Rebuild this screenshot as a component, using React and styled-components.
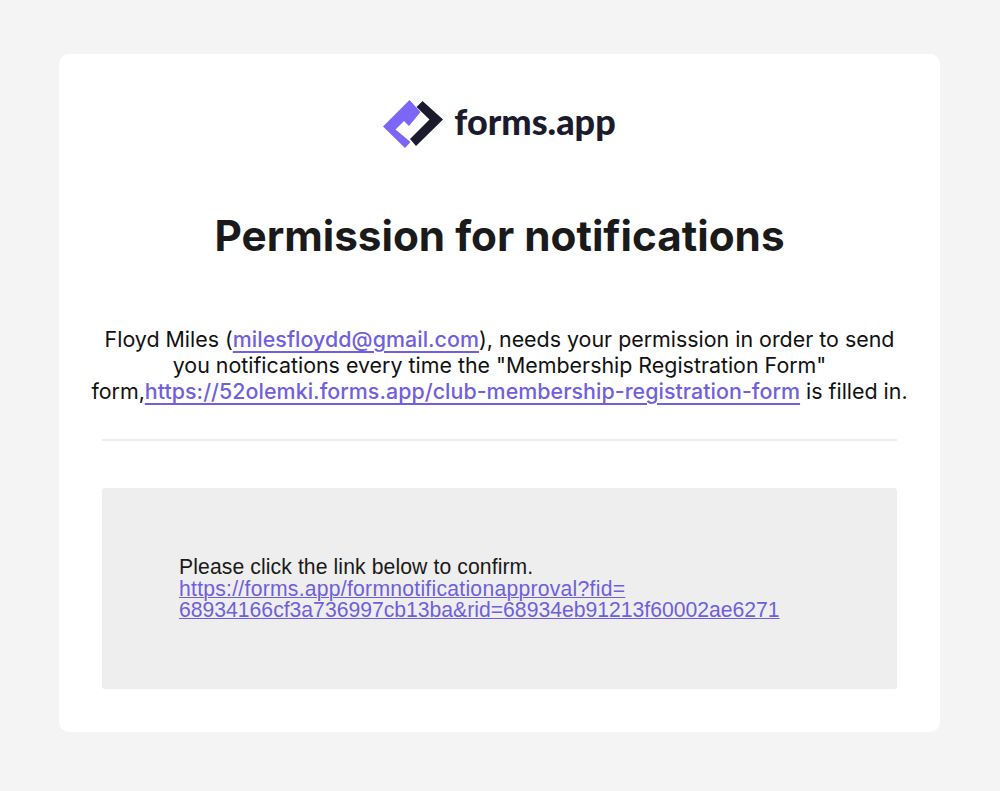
import React from "react";
import styled, { createGlobalStyle } from "styled-components";

const GlobalStyle = createGlobalStyle`
  html, body {
    margin: 0;
    padding: 0;
    background: #f4f4f4;
  }
`;

const Page = styled.div`
  width: 1000px;
  height: 791px;
  padding: 54px 60px 0 59px;
  box-sizing: border-box;
  background: #f4f4f4;
  font-family: Inter, "Liberation Sans", sans-serif;
  overflow: hidden;
`;

const Card = styled.main`
  height: 678px;
  box-sizing: border-box;
  padding-top: 46px;
  background: #ffffff;
  border-radius: 10px;
  display: flex;
  flex-direction: column;
  align-items: center;
`;

const Brand = styled.div`
  display: flex;
  align-items: center;
  gap: 11px;
  height: 48px;
`;

const BrandName = styled.span`
  padding-bottom: 6px;
  font-family: Lato, Inter, sans-serif;
  font-size: 36px;
  font-weight: 900;
  color: #1c1b2e;
`;

const Title = styled.h1`
  margin: 63px 0 0;
  font-size: 42.25px;
  line-height: 50px;
  font-weight: 700;
  color: #1a1a1a;
  text-align: center;
`;

const Intro = styled.p`
  margin: 65px 0 0;
  font-size: 21.4px;
  line-height: 26px;
  color: #111111;
  text-align: center;
  white-space: nowrap;
`;

const Link = styled.a`
  color: #7060e0;
  font-weight: 500;
  letter-spacing: 0.05px;
  text-decoration: underline;
  text-underline-offset: 4px;
  text-decoration-thickness: 1.5px;
`;

const Divider = styled.hr`
  width: 795px;
  height: 2px;
  margin: 34.5px 0 0;
  border: 0;
  background: #eeeeee;
`;

const Notice = styled.section`
  width: 795px;
  height: 201px;
  margin-top: 47px;
  padding: 68.5px 0 0 77px;
  box-sizing: border-box;
  background: #eeeeee;
  border-radius: 3px;
  font-family: "Liberation Sans", Arial, sans-serif;
  font-size: 21.16px;
  line-height: 21.5px;
  color: #1a1a1a;
`;

const NoticeLine = styled.span`
  display: block;
  letter-spacing: ${(props) => props.$spacing || 0}px;
`;

const NoticeLink = styled.a`
  display: block;
  color: #6f5fdc;
  text-decoration: underline;
  text-decoration-thickness: 1px;
`;

const Logo = () => (
  <svg width="60" height="48" viewBox="0 0 60 48" aria-hidden="true">
    <path
      d="M26.5 0 L37.5 12 L26 26 L21 21 L12.5 29.5 L27.5 42 L22 48 L0 26.5 Z"
      fill="#7b66f5"
    />
    <path
      d="M39.5 1 L33.5 7 L46.5 19.5 L27 39 L33 46 L60 19.5 Z"
      fill="#1c1b2e"
    />
  </svg>
);

export default function App() {
  return (
    <>
      <GlobalStyle />
      <Page>
        <Card>
          <Brand>
            <Logo />
            <BrandName>forms.app</BrandName>
          </Brand>
          <Title>Permission for notifications</Title>
          <Intro>
            Floyd Miles (<Link href="#">milesfloydd@gmail.com</Link>), needs your permission in order to send
            <br />
            you notifications every time the "Membership Registration Form"
            <br />
            form,<Link href="#">https://52olemki.forms.app/club-membership-registration-form</Link> is filled in.
          </Intro>
          <Divider />
          <Notice>
            <NoticeLine $spacing={0.1}>Please click the link below to confirm.</NoticeLine>
            <NoticeLink href="#">
              <NoticeLine $spacing={0.25}>https://forms.app/formnotificationapproval?fid=</NoticeLine>
              <NoticeLine>68934166cf3a736997cb13ba&amp;rid=68934eb91213f60002ae6271</NoticeLine>
            </NoticeLink>
          </Notice>
        </Card>
      </Page>
    </>
  );
}
